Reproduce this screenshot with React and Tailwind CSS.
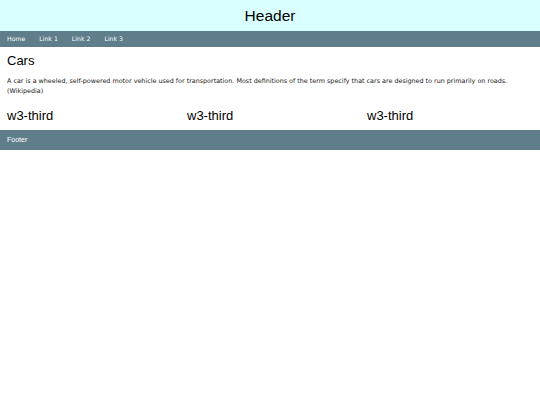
import React from 'react';

const links = ['Home', 'Link 1', 'Link 2', 'Link 3'];

export default function App() {
  return (
    <div className="w-[540px] min-h-[405px] bg-white" style={{ fontFamily: '"Liberation Sans", Arial, sans-serif' }}>
      {/* Header */}
      <div className="h-[31px] bg-[#d9ffff] flex items-center justify-center">
        <h1 className="text-[15.5px] leading-none text-black">Header</h1>
      </div>

      {/* Nav */}
      <div className="h-[16px] bg-[#607d8b] flex items-center px-[7px] gap-[14px] text-[6.2px] text-white font-['DejaVu_Sans',sans-serif]">
        {links.map((l) => (
          <span key={l}>{l}</span>
        ))}
      </div>

      {/* Content */}
      <div className="px-[7px] pt-[6px]">
        <h2 className="text-[13px] leading-[16px] text-black">Cars</h2>
        <p className="mt-[7px] text-[6.4px] leading-[10px] text-[#222] font-['DejaVu_Sans',sans-serif]">
          A car is a wheeled, self-powered motor vehicle used for transportation. Most definitions of the term specify that cars are designed to run primarily on roads. (Wikipedia)
        </p>
      </div>
      <div className="grid grid-cols-3 pt-[12px] pb-[6px]">
        <div className="px-[7px] text-[13px] leading-[16px] text-black">w3-third</div>
        <div className="px-[7px] text-[13px] leading-[16px] text-black">w3-third</div>
        <div className="px-[7px] text-[13px] leading-[16px] text-black">w3-third</div>
      </div>

      {/* Footer */}
      <div className="h-[20px] bg-[#607d8b] flex items-center px-[7px] text-[7px] text-white">
        Footer
      </div>
    </div>
  );
}
